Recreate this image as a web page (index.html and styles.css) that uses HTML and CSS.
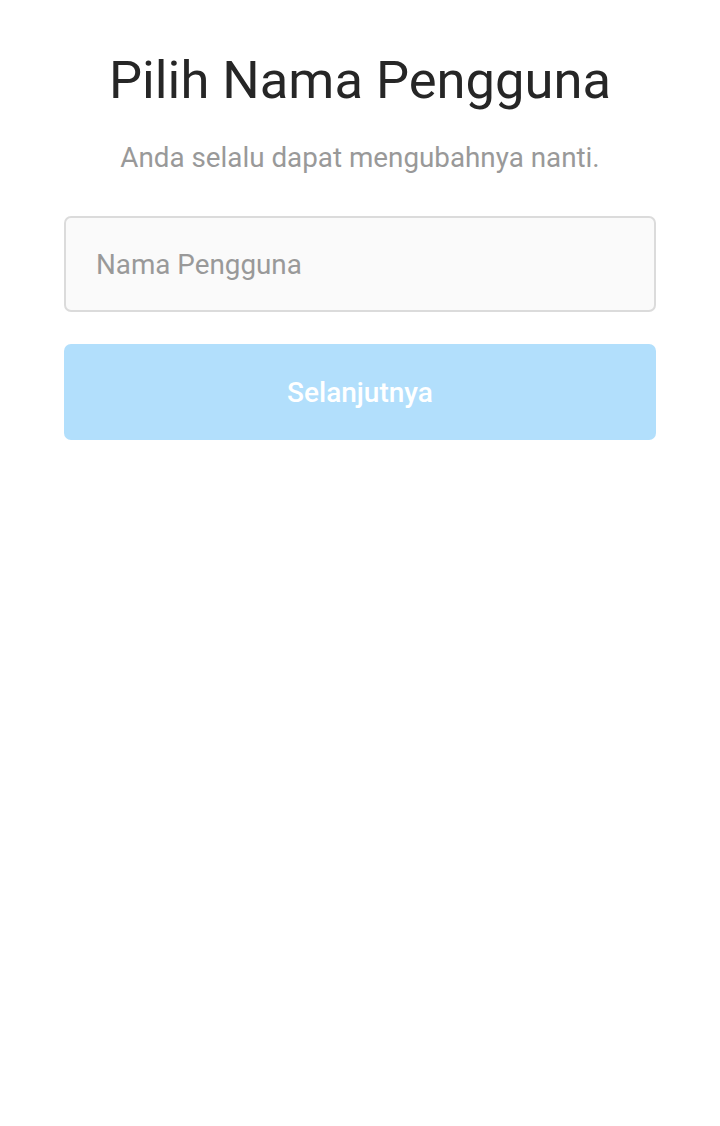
FILE: index.html
```html
<!DOCTYPE html>
<html lang="id">
<head>
  <meta charset="UTF-8">
  <meta name="viewport" content="width=device-width, initial-scale=1.0">
  <title>Pilih Nama Pengguna</title>
  <link rel="stylesheet" href="styles.css">
</head>
<body>
  <!-- Username form -->
  <div class="main-content">
    <h1 class="title">Pilih Nama Pengguna</h1>
    <p class="subtitle">Anda selalu dapat mengubahnya nanti.</p>
    <input class="username-input" type="text" placeholder="Nama Pengguna" aria-label="Nama Pengguna" />
    <button class="next-button" disabled>Selanjutnya</button>
  </div>
</body>
</html>
```
FILE: styles.css
```css
/* General Styles */
body {
  margin: 0;
  font-family: Roboto, "Noto Sans", sans-serif;
  background-color: #fff;
  height: 100vh;
}

/* Main Content */
.main-content {
  display: flex;
  flex-direction: column;
  align-items: stretch;
  padding: 46px 64px 0;
}

.title {
  margin: 0;
  text-align: center;
  font-size: 52.5px;
  font-weight: 400;
  line-height: 68px;
  color: #262626;
}

.subtitle {
  margin: 26px 0 0;
  text-align: center;
  font-size: 27.8px;
  line-height: 36px;
  color: #999;
}

.username-input {
  margin-top: 40px;
  height: 96px;
  box-sizing: border-box;
  padding: 0 30px;
  border: 2px solid #dbdbdb;
  border-radius: 7px;
  background-color: #fafafa;
  font-family: inherit;
  font-size: 27.8px;
  color: #262626;
}

.username-input::placeholder {
  color: #999;
}

.next-button {
  margin-top: 32px;
  height: 96px;
  border: none;
  border-radius: 7px;
  background-color: #b2dffc;
  color: #fff;
  font-family: inherit;
  font-size: 28px;
  font-weight: 500;
}
```
